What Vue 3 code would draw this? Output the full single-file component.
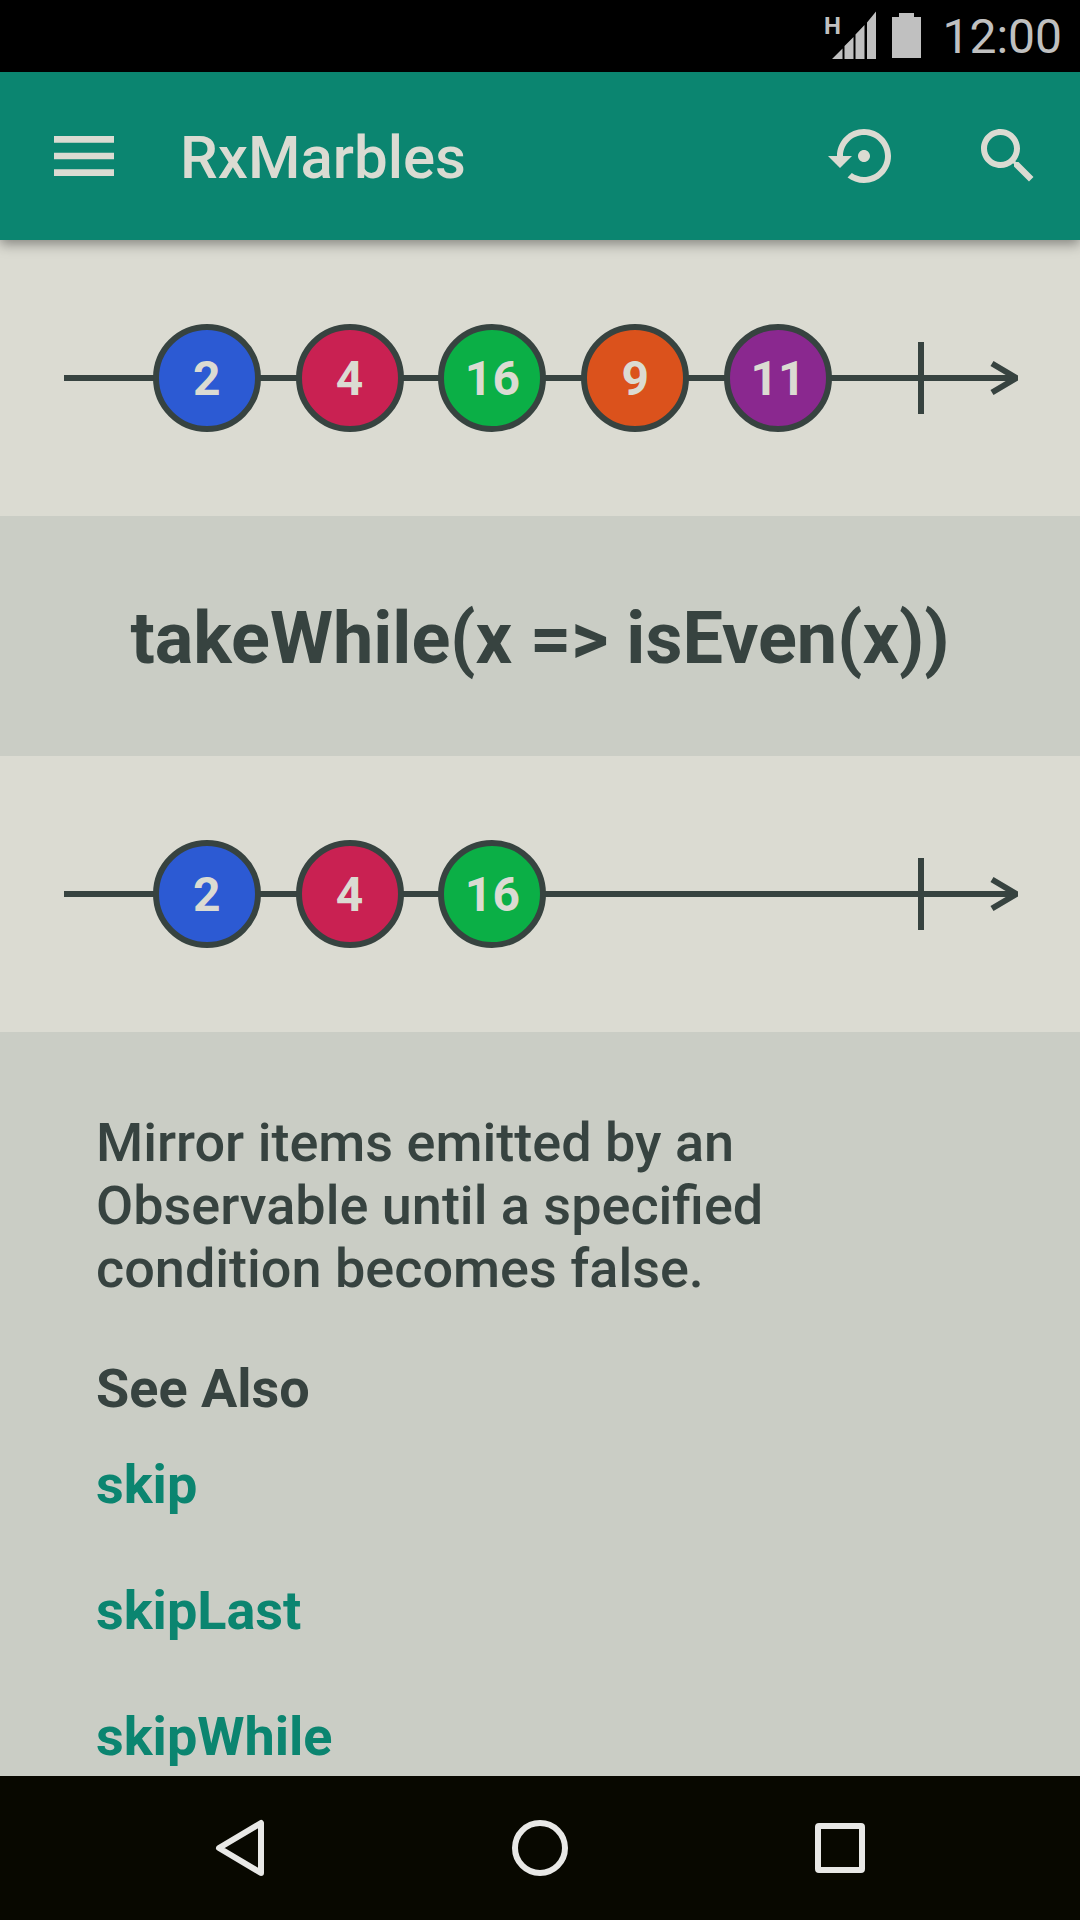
<script setup>
const blue = '#2c5ad3'
const red = '#c92152'
const green = '#0baf46'
const orange = '#db521c'
const purple = '#8a288f'

const source = [
  { value: 2, time: 15, color: blue },
  { value: 4, time: 30, color: red },
  { value: 16, time: 45, color: green },
  { value: 9, time: 60, color: orange },
  { value: 11, time: 75, color: purple },
]
const streams = [
  { id: 'input', label: 'Source', marbles: source },
  { id: 'output', label: 'Result', marbles: source.slice(0, 3) },
]
const related = ['skip', 'skipLast', 'skipWhile']
</script>

<template>
  <div class="screen">
    <div class="status">
      <svg class="signal" width="54" height="50" viewBox="0 0 54 50" aria-hidden="true">
        <text x="2" y="23">H</text>
        <path d="M10 48 20.500 37.500V48zM22.500 35 31.500 26V48H22.500zM33.500 23.500 42.500 14V48H33.500zM45 11.500 54 .5V48H45z" />
      </svg>
      <svg class="battery" width="30" height="48" viewBox="0 0 30 48" aria-hidden="true">
        <path d="M7 1H22V5H29V46H0V5H7z" />
      </svg>
      <time>12:00</time>
    </div>

    <header class="toolbar">
      <button class="menu" aria-label="Open menu">
        <svg width="80" height="80" viewBox="0 0 24 24"><path d="M3 18h18v-2H3v2zm0-5h18v-2H3v2zm0-7v2h18V6H3z" /></svg>
      </button>
      <h1>RxMarbles</h1>
      <button class="action" aria-label="Reset">
        <svg width="72" height="72" viewBox="0 0 24 24"><path d="M14 12c0-1.100-.9-2-2-2s-2 .9-2 2 .9 2 2 2 2-.9 2-2zm-2-9c-4.970 0-9 4.030-9 9H0l4 4 4-4H5c0-3.870 3.130-7 7-7s7 3.130 7 7-3.130 7-7 7c-1.510 0-2.910-.49-4.060-1.300l-1.420 1.440C8.040 20.300 9.940 21 12 21c4.970 0 9-4.030 9-9s-4.030-9-9-9z" /></svg>
      </button>
      <button class="action" aria-label="Search">
        <svg width="72" height="72" viewBox="0 0 24 24"><path d="M15.500 14h-.79l-.28-.27C15.410 12.590 16 11.110 16 9.500 16 5.910 13.090 3 9.500 3S3 5.910 3 9.500 5.910 16 9.500 16c1.610 0 3.090-.59 4.230-1.570l.27.28v.79l5 4.990L20.490 19l-4.990-5zm-6 0C7.010 14 5 11.990 5 9.500S7.010 5 9.500 5 14 7.010 14 9.500 11.990 14 9.500 14z" /></svg>
      </button>
    </header>

    <main>
      <section v-for="stream in streams" :key="stream.id" class="stream" :class="stream.id" :aria-label="stream.label">
        <div class="timeline">
          <svg class="arrow" width="28" height="36" viewBox="0 0 28 36" aria-hidden="true">
            <path d="M2 3.500 26.500 18 2 32.500" />
          </svg>
          <span class="complete"></span>
          <span
            v-for="marble in stream.marbles"
            :key="marble.value"
            class="marble"
            :style="{ left: marble.time + '%', backgroundColor: marble.color }"
          >{{ marble.value }}</span>
        </div>
      </section>
      <h2 class="operator">takeWhile(x =&gt; isEven(x))</h2>
      <section class="details">
        <p>Mirror items emitted by an Observable until a specified condition becomes false.</p>
        <h3>See Also</h3>
        <ul>
          <li v-for="name in related" :key="name"><a :href="'#' + name">{{ name }}</a></li>
        </ul>
      </section>
    </main>

    <nav class="system">
      <button aria-label="Back">
        <svg width="60" height="60" viewBox="0 0 60 60"><path d="M51 5V55L9 30z" /></svg>
      </button>
      <button aria-label="Home">
        <svg width="60" height="60" viewBox="0 0 60 60"><circle cx="30" cy="30" r="25" /></svg>
      </button>
      <button aria-label="Recent apps">
        <svg width="60" height="60" viewBox="0 0 60 60"><rect x="8" y="8" width="44" height="44" rx="1" /></svg>
      </button>
    </nav>
  </div>
</template>

<style>
body {
  margin: 0;
  background: #cacdc5;
}
</style>

<style scoped>
.screen {
  display: flex;
  flex-direction: column;
  min-height: 100vh;
  color: #374340;
  font-family: Roboto, sans-serif;
}

button {
  display: flex;
  align-items: center;
  justify-content: center;
  padding: 0;
  border: 0;
  background: none;
  cursor: pointer;
}

.status {
  display: flex;
  align-items: center;
  justify-content: flex-end;
  height: 72px;
  padding-right: 18px;
  background: #000;
  color: #c0c0c0;
  fill: #c0c0c0;
}

.signal {
  overflow: visible;
}

.signal text {
  font-size: 24px;
  font-weight: 700;
}

.battery {
  margin: 0 20px 0 16px;
}

.status time {
  padding-top: 2px;
  font-size: 48px;
  line-height: 72px;
}

.toolbar {
  position: relative;
  display: flex;
  align-items: center;
  height: 168px;
  background: #0b8570;
  box-shadow: 0 4px 12px rgba(0, 0, 0, 0.4);
  color: #dbdbd2;
  fill: #dbdbd2;
}

.menu {
  width: 168px;
  height: 168px;
}

.toolbar h1 {
  flex: 1;
  margin: 0;
  padding: 4px 0 0 12px;
  font-size: 60px;
  font-weight: 500;
  line-height: 72px;
}

.action {
  width: 144px;
  height: 144px;
}

main {
  display: flex;
  flex: 1;
  flex-direction: column;
}

.stream {
  padding: 84px 64px;
  background: #dbdbd2;
}

.input {
  order: -2;
}

.operator {
  order: -1;
}

.timeline {
  position: relative;
  height: 108px;
  background: linear-gradient(#374340, #374340) center / 100% 6px no-repeat;
}

.arrow {
  position: absolute;
  top: 36px;
  right: -2px;
  fill: none;
  stroke: #374340;
  stroke-width: 6px;
}

.complete {
  position: absolute;
  top: 18px;
  left: 90%;
  width: 6px;
  height: 72px;
  margin-left: -3px;
  background: #374340;
}

.marble {
  position: absolute;
  top: 0;
  box-sizing: border-box;
  width: 108px;
  height: 108px;
  margin-left: -54px;
  border: 6px solid #374340;
  border-radius: 50%;
  color: #dbdbd2;
  font-size: 48px;
  font-weight: 700;
  line-height: 98px;
  text-align: center;
}

.operator {
  margin: 0;
  padding: 81px 24px 75px;
  font-size: 72px;
  font-weight: 700;
  line-height: 84px;
  text-align: center;
}

.details {
  padding: 79px 96px 8px;
  font-size: 54px;
  line-height: 63px;
}

.details p,
.details h3 {
  margin: 0;
  font-size: 54px;
}

.details p {
  font-weight: 500;
}

.details h3 {
  margin: 57px 0 33px;
  font-weight: 700;
}

.details ul {
  display: flex;
  flex-direction: column;
  gap: 63px;
  margin: 0;
  padding: 0;
  list-style: none;
}

.details a {
  color: #0b8570;
  font-weight: 700;
  text-decoration: none;
}

.system {
  display: flex;
  justify-content: center;
  height: 144px;
  background: #080800;
}

.system button {
  width: 300px;
}

.system svg {
  fill: none;
  stroke: #e8e8e6;
  stroke-width: 6px;
  stroke-linejoin: round;
}
</style>
